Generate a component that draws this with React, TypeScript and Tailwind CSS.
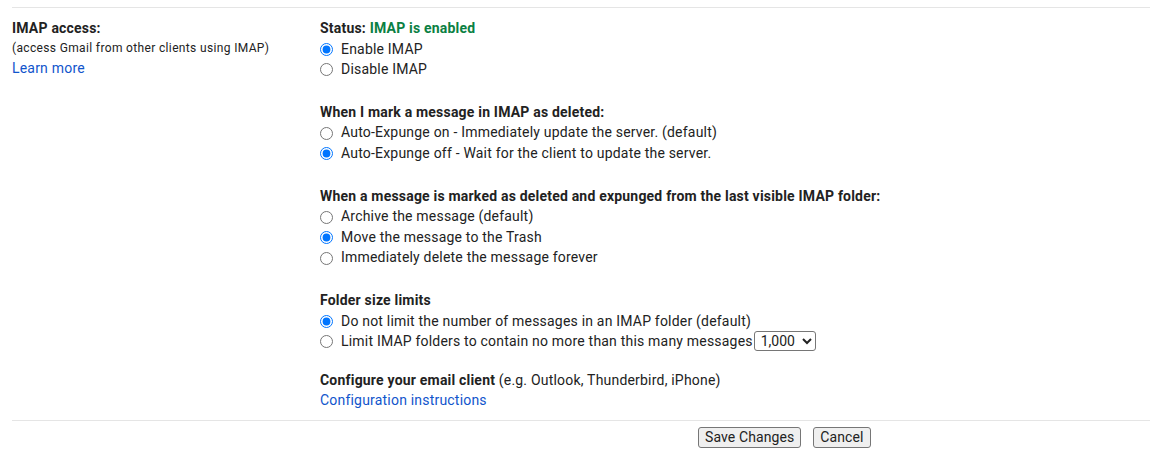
import React from "react";

type Option = { label: string; checked?: boolean; extra?: React.ReactNode };

const RadioRow = ({ name, option }: { name: string; option: Option }) => (
  <label className="flex items-center h-[20.4px]">
    <input
      type="radio"
      name={name}
      defaultChecked={option.checked}
      className="m-0 mr-[8px] w-[13px] h-[13px] translate-y-[1px]"
    />
    <span>{option.label}</span>
    {option.extra}
  </label>
);

const Group = ({
  title,
  name,
  options,
}: {
  title: React.ReactNode;
  name: string;
  options: Option[];
}) => (
  <div className="mb-[22.7px]">
    <div className="h-[20.4px] leading-[20.4px] font-bold">{title}</div>
    {options.map((o) => (
      <RadioRow key={o.label} name={name} option={o} />
    ))}
  </div>
);

export default function App() {
  return (
    <div className="bg-white text-[14px] leading-[20px] tracking-[0.2px] text-[#222] font-['Roboto','Liberation_Sans',sans-serif] w-[1150px] h-[469px] overflow-hidden">
      <div className="ml-[12px] mt-[7px] border-t border-[#e5e5e5]">
        <div className="flex pt-[10px]">
          <div className="w-[308px] shrink-0">
            <div className="font-bold h-[20px]">IMAP access:</div>
            <div className="text-[12px] h-[20px] leading-[21px] tracking-[0.35px]">
              (access Gmail from other clients using IMAP)
            </div>
            <a href="#" className="text-[#1155cc] leading-[20px]">
              Learn more
            </a>
          </div>
          <div className="flex-1">
            <Group
              name="imap"
              title={
                <>
                  Status: <span className="text-[#0b8043]">IMAP is enabled</span>
                </>
              }
              options={[{ label: "Enable IMAP", checked: true }, { label: "Disable IMAP" }]}
            />
            <Group
              name="expunge"
              title="When I mark a message in IMAP as deleted:"
              options={[
                { label: "Auto-Expunge on - Immediately update the server. (default)" },
                {
                  label: "Auto-Expunge off - Wait for the client to update the server.",
                  checked: true,
                },
              ]}
            />
            <Group
              name="deleted"
              title="When a message is marked as deleted and expunged from the last visible IMAP folder:"
              options={[
                { label: "Archive the message (default)" },
                { label: "Move the message to the Trash", checked: true },
                { label: "Immediately delete the message forever" },
              ]}
            />
            <Group
              name="folder"
              title="Folder size limits"
              options={[
                {
                  label: "Do not limit the number of messages in an IMAP folder (default)",
                  checked: true,
                },
                {
                  label: "Limit IMAP folders to contain no more than this many messages",
                  extra: (
                    <select
                      defaultValue="1000"
                      className="ml-[1px] w-[62px] h-[20px] border border-[#767676] rounded-[3px] bg-white text-[14px] leading-[18px] pl-[2px] tracking-normal"
                    >
                      <option value="1000">1,000</option>
                      <option value="2000">2,000</option>
                      <option value="5000">5,000</option>
                      <option value="10000">10,000</option>
                    </select>
                  ),
                },
              ]}
            />
            <div className="-mt-[4px]">
              <span className="font-bold">Configure your email client</span> (e.g. Outlook,
              Thunderbird, iPhone)
            </div>
            <a href="#" className="text-[#1155cc] block h-[20px]">
              Configuration instructions
            </a>
          </div>
        </div>
        <div className="mt-[10px] border-t border-[#e5e5e5] pt-[6px] pl-[686px] flex gap-[12px]">
          <button className="h-[21px] px-[6px] bg-[#efefef] border border-[#767676] rounded-[3px] leading-[19px] tracking-[0.1px]">
            Save Changes
          </button>
          <button className="h-[21px] px-[6px] bg-[#efefef] border border-[#767676] rounded-[3px] leading-[19px] tracking-[0.1px]">
            Cancel
          </button>
        </div>
      </div>
    </div>
  );
}
